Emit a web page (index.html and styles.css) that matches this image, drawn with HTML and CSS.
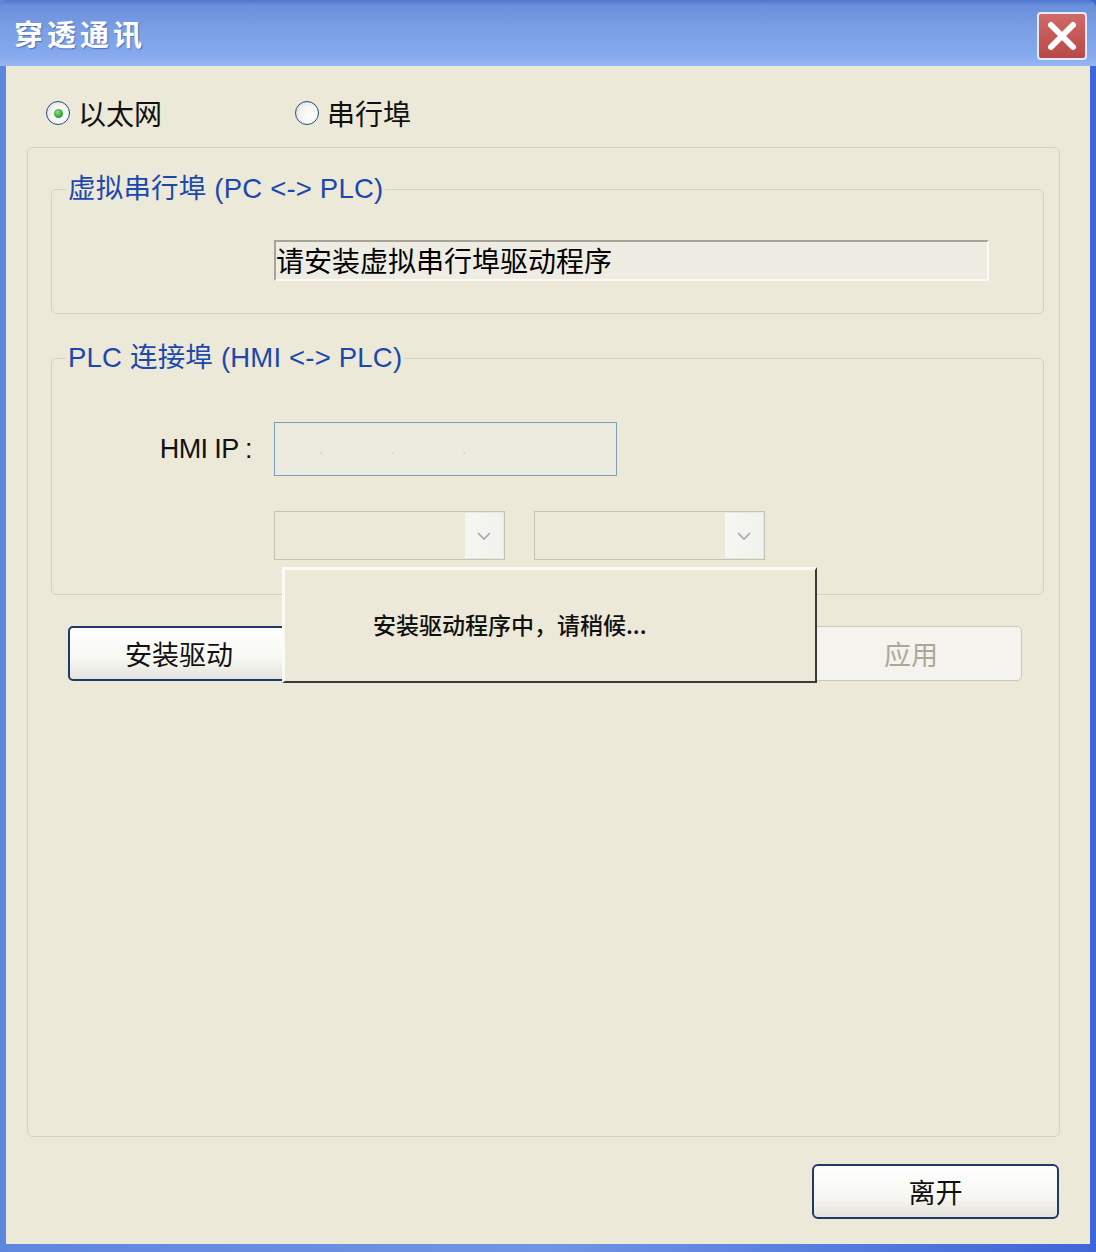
FILE: index.html
```html
<!DOCTYPE html>
<html lang="zh">
<head>
<meta charset="utf-8">
<title>穿透通讯</title>
<link rel="stylesheet" href="styles.css">
</head>
<body>
<div class="window">
  <div class="titlebar">
    <span class="title">穿透通讯</span>
    <div class="close">
      <svg width="34" height="34" viewBox="0 0 34 34"><path d="M6 6 L28 28 M28 6 L6 28" stroke="#fff" stroke-width="6" stroke-linecap="round"/></svg>
    </div>
  </div>
  <div class="client">
    <div class="radios">
      <label class="radio first"><span class="dot checked"></span><span class="rlabel">以太网</span></label>
      <label class="radio"><span class="dot"></span><span class="rlabel">串行埠</span></label>
    </div>
    <div class="outer">
      <fieldset class="group g1">
        <legend>虚拟串行埠 (PC &lt;-&gt; PLC)</legend>
        <div class="status">请安装虚拟串行埠驱动程序</div>
      </fieldset>
      <fieldset class="group g2">
        <legend>PLC 连接埠 (HMI &lt;-&gt; PLC)</legend>
        <div class="iprow">
          <span class="iplabel">HMI IP :</span>
          <div class="ipfield"><span>.</span><span>.</span><span>.</span></div>
        </div>
        <div class="combos">
          <div class="combo"><div class="combo-btn"><svg width="14" height="8" viewBox="0 0 14 8"><path d="M1 1 L7 7 L13 1" stroke="#a8a8a0" stroke-width="1.6" fill="none"/></svg></div></div>
          <div class="combo"><div class="combo-btn"><svg width="14" height="8" viewBox="0 0 14 8"><path d="M1 1 L7 7 L13 1" stroke="#a8a8a0" stroke-width="1.6" fill="none"/></svg></div></div>
        </div>
      </fieldset>
      <div class="buttons">
        <div class="btn">安装驱动</div>
        <div class="btn disabled">应用</div>
      </div>
      <div class="popup">安装驱动程序中，请稍候...</div>
    </div>
    <div class="footer">
      <div class="btn leave">离开</div>
    </div>
  </div>
</div>
</body>
</html>
```

FILE: styles.css
```css
* { box-sizing: border-box; }
html, body { margin: 0; padding: 0; }
body {
  width: 1096px;
  height: 1252px;
  overflow: hidden;
  background: #3a62d4;
  font-family: "Liberation Sans", "Noto Sans CJK SC", sans-serif;
}
.window {
  width: 1096px;
  height: 1252px;
  display: flex;
  flex-direction: column;
  background: linear-gradient(90deg, #5e86dc 0%, #6f95e4 50%, #3e66d6 100%);
}
.titlebar {
  height: 66px;
  flex: none;
  display: flex;
  align-items: center;
  justify-content: space-between;
  padding: 0 9px 0 14px;
  background: linear-gradient(180deg, #4f75cf 0%, #6a8fdc 8%, #7b9fe4 45%, #86aaee 85%, #97b7f2 100%);
  border-radius: 8px 8px 0 0;
}
.title {
  color: #fff;
  font-family: "Noto Sans CJK SC", sans-serif;
  font-weight: 700;
  font-size: 29px;
  letter-spacing: 4px;
  text-shadow: 1px 1px 1px #5070b8;
  margin-top: 0;
}
.close {
  width: 50px;
  height: 48px;
  margin-top: 6px;
  border: 2px solid #e6eaf6;
  border-radius: 4px;
  background: linear-gradient(180deg, #d06a6a 0%, #c25454 60%, #b84a4a 100%);
  display: flex;
  align-items: center;
  justify-content: center;
}
.client {
  flex: 1;
  margin: 0 6px 8px 6px;
  background: #ece9d8;
  padding-top: 32px;
  display: flex;
  flex-direction: column;
}
.radios {
  height: 30px;
  display: flex;
  align-items: center;
  padding-left: 40px;
}
.radio {
  display: flex;
  align-items: center;
}
.radio.first { width: 249px; }
.dot {
  width: 24px;
  height: 24px;
  border-radius: 50%;
  border: 1px solid #1f4f7e;
  background: radial-gradient(circle at 60% 60%, #ffffff 0%, #f4f4f0 50%, #d8d8d0 100%);
  display: flex;
  align-items: center;
  justify-content: center;
}
.dot.checked::after {
  content: "";
  width: 9px;
  height: 9px;
  border-radius: 50%;
  background: radial-gradient(circle at 40% 35%, #8fe08f 0%, #30a830 60%, #1c8a1c 100%);
}
.rlabel {
  margin-left: 8px;
  font-family: "Noto Sans CJK SC", sans-serif;
  font-size: 28px;
  line-height: 30px;
  color: #111;
}
.outer {
  position: relative;
  margin: 19px 30px 0 21px;
  height: 990px;
  border: 1px solid #d4d1c0;
  border-radius: 6px;
  padding: 26px 15px 0 23px;
}
.group {
  margin: 0;
  padding: 0;
  border: 1px solid #d4d1c0;
  border-radius: 5px;
  min-width: 0;
}
.group legend {
  margin-left: 14px;
  padding: 0 2px;
  font-size: 27.5px;
  line-height: 30px;
  color: #1c48ae;
  letter-spacing: 0.2px;
}
.g1 { padding-bottom: 32px; }
.status {
  margin: 36px 0 0 222px;
  width: 715px;
  height: 41px;
  border-top: 2px solid #a6a496;
  border-left: 2px solid #a6a496;
  border-right: 2px solid #fbfaf4;
  border-bottom: 2px solid #fbfaf4;
  background: #efede3;
  font-family: "Noto Sans CJK SC", sans-serif;
  font-size: 28px;
  line-height: 36px;
  color: #000;
  padding-left: 0;
  white-space: nowrap;
  overflow: hidden;
}
.g2 {
  margin-top: 29px;
  padding-bottom: 34px;
}
.iprow {
  margin-top: 49px;
  display: flex;
  align-items: center;
}
.iplabel {
  width: 200px;
  text-align: right;
  font-size: 27px;
  letter-spacing: -0.6px;
  color: #111;
}
.ipfield {
  margin-left: 22px;
  width: 343px;
  height: 54px;
  border: 1px solid #7f9db9;
  background: #ecebe0;
  display: flex;
  align-items: center;
  padding-left: 44px;
  gap: 67px;
}
.ipfield span {
  color: #d2d0c2;
  font-size: 16px;
}
.combos {
  margin: 35px 0 0 222px;
  display: flex;
  gap: 29px;
}
.combo {
  width: 231px;
  height: 49px;
  border: 1px solid #c4c2b4;
  background: #ece9d8;
  display: flex;
  justify-content: flex-end;
  padding: 1px;
}
.combo-btn {
  width: 38px;
  background: linear-gradient(90deg, #f6f6f2 0%, #f1f1ed 100%);
  display: flex;
  align-items: center;
  justify-content: center;
}
.buttons {
  margin: 31px 22px 0 17px;
  display: flex;
  justify-content: space-between;
}
.btn {
  width: 222px;
  height: 55px;
  border: 2px solid #1d3a6b;
  border-radius: 5px;
  background: linear-gradient(180deg, #ffffff 0%, #f7f7f3 60%, #e4e3dc 100%);
  font-family: "Noto Sans CJK SC", sans-serif;
  font-size: 27px;
  color: #111;
  display: flex;
  align-items: center;
  justify-content: center;
}
.btn.disabled {
  border: 1px solid #cac8bb;
  background: #f4f3ee;
  color: #aca899;
}
.popup {
  position: absolute;
  left: 254px;
  top: 419px;
  width: 535px;
  height: 116px;
  background: #ece9d8;
  border-top: 3px solid #fbfaf3;
  border-left: 3px solid #fbfaf3;
  border-right: 2px solid #3a3a3a;
  border-bottom: 2px solid #3a3a3a;
  font-family: "Noto Sans CJK SC", sans-serif;
  font-size: 23px;
  font-weight: 500;
  color: #111;
  padding: 39px 0 0 88px;
  line-height: 30px;
}
.footer {
  margin: 27px 31px 0 0;
  display: flex;
  justify-content: flex-end;
}
.btn.leave {
  width: 247px;
  border-radius: 6px;
}
```
